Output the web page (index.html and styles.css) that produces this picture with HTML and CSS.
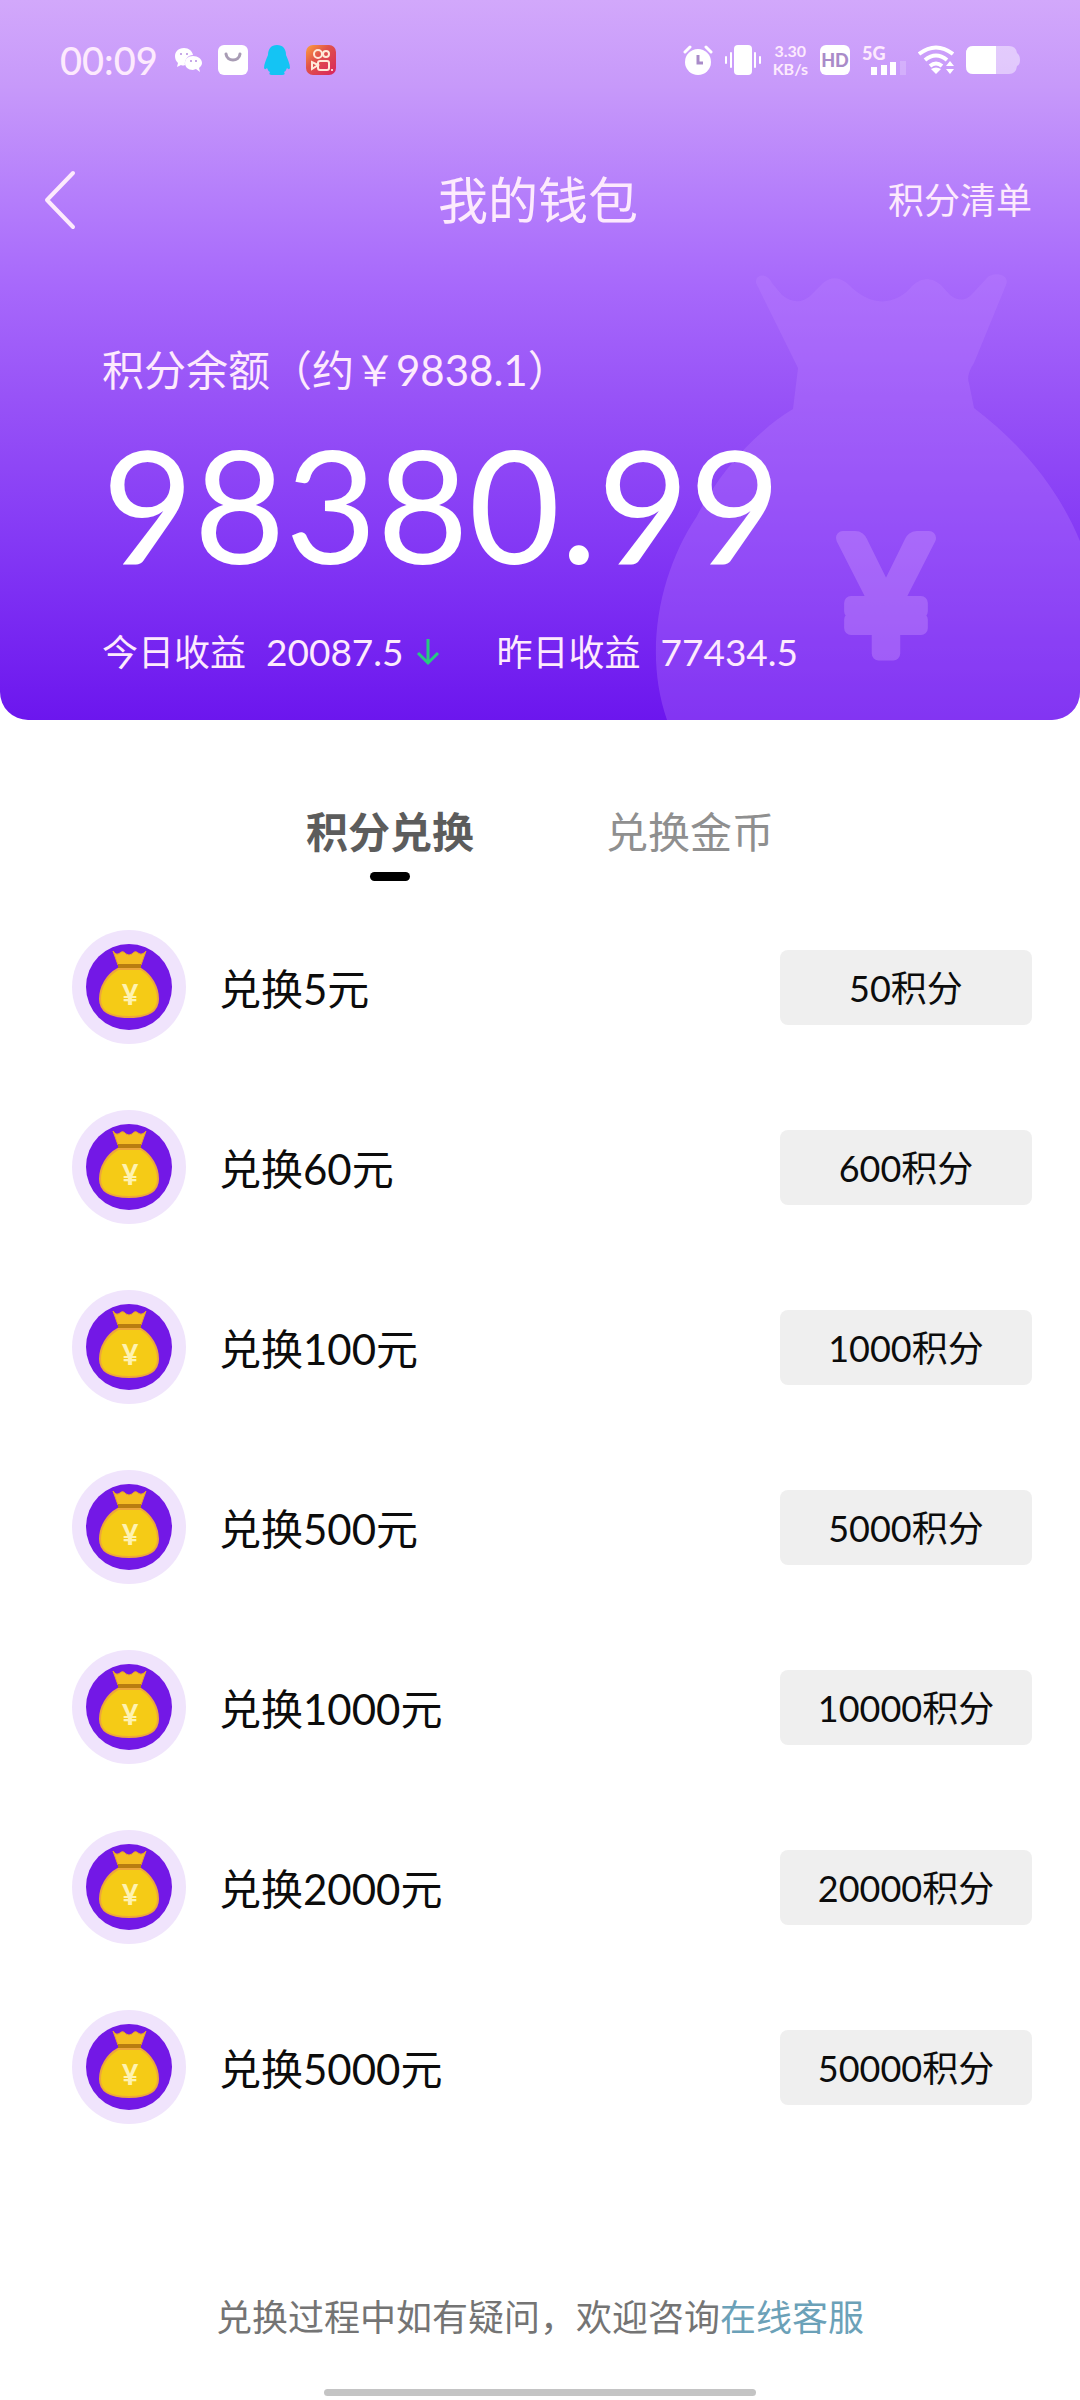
FILE: index.html
```html
<!DOCTYPE html>
<html lang="zh-CN">
<head>
    <meta charset="utf-8">
    <meta name="viewport" content="width=device-width, initial-scale=1">
    <title>我的钱包</title>
    <link rel="stylesheet" href="styles.css">
</head>
<body>
    <!-- shared money bag icon -->
    <svg class="sprite" aria-hidden="true">
        <symbol id="bag" viewBox="0 0 114 114">
            <circle cx="57" cy="57" r="57" fill="#f0e4fc"/>
            <circle cx="57" cy="57" r="43" fill="#7318e6"/>
            <path d="M41 21 Q44 26 48 23 Q51 20 54 24 Q57 26 60 24 Q63 20 66 23 Q70 26 74 21 L69 35 H46 z" fill="#f5bd22" stroke="#e9a02c" stroke-width="1"/>
            <path d="M46 34 h23 v5 h-23 z" fill="#b97d10"/>
            <path d="M46 39 h23 C79 45 86 57 86 69 C86 82 76 87 57 87 C38 87 28 82 28 69 C28 57 35 45 46 39 z" fill="#f5cb16" stroke="#eda63a" stroke-width="2"/>
            <text x="58" y="75" class="bag-yen">¥</text>
        </symbol>
    </svg>

    <header class="header">
        <svg class="watermark" viewBox="0 0 425 449" aria-hidden="true">
            <path class="watermark-bag" d="M101 12 C100 2 113 2 117 12 L127 24 Q142 36 155 25 L168 12 Q180 2 193 13 C215 36 240 36 258 14 Q272 2 286 14 L295 24 Q308 34 318 22 L331 8 C336 0 356 2 351 14 L319 92 Q311 104 314 112 L319 137 C365 172 402 215 425 270 V449 H12 C-12 380 5 300 42 245 C62 205 98 162 138 138 L143 97 z"/>
            <text class="watermark-yen" x="231" y="382">¥</text>
        </svg>

        <div class="status">
            <div class="status-left">
                <time class="clock">00:09</time>
                <svg width="28" height="26" viewBox="0 0 28 26">
                    <path d="M10 1 C4 1 1 5 1 9 C1 12 2 14 4 16 L3 20 L7 18 Q9 19 11 18 C10 13 14 8 19 8 C18 4 15 1 10 1 z" fill="#fff"/>
                    <path d="M19 9 C14 9 11 12 11 16 C11 20 14 23 19 23 L22 22 L26 25 L25 21 C27 19 28 18 28 16 C28 12 24 9 19 9 z" fill="#fff"/>
                    <g fill="#b58de0"><circle cx="7" cy="7" r="1"/><circle cx="13" cy="7" r="1"/><circle cx="17" cy="14" r="1"/><circle cx="22" cy="14" r="1"/></g>
                </svg>
                <svg width="30" height="30" viewBox="0 0 30 30">
                    <rect width="30" height="30" rx="6" fill="#fff"/>
                    <path d="M8 9 C9 17 21 17 22 9" fill="none" stroke="#a89cb4" stroke-width="3" stroke-linecap="round"/>
                </svg>
                <svg width="26" height="30" viewBox="0 0 26 30">
                    <path d="M13 0 C7 0 4 4 4 10 C2 15 0 19 0 23 C1 25 2 24 3 23 Q4 26 6 27 Q4 30 8 30 H18 Q22 30 20 27 Q22 26 23 23 C24 24 25 25 26 23 C26 19 24 15 22 10 C22 4 19 0 13 0 z" fill="#14c4f4"/>
                </svg>
                <svg width="30" height="30" viewBox="0 0 30 30">
                    <defs>
                        <linearGradient id="ks" x1="0" y1="0" x2="1" y2="1">
                            <stop offset="0" stop-color="#ffa23d"/>
                            <stop offset=".4" stop-color="#e0524a"/>
                            <stop offset="1" stop-color="#d8245e"/>
                        </linearGradient>
                    </defs>
                    <rect width="30" height="30" rx="7" fill="url(#ks)"/>
                    <g fill="none" stroke="#ffe9d8" stroke-width="2">
                        <circle cx="12" cy="9" r="4"/><circle cx="20" cy="9" r="3"/>
                        <rect x="12" y="16" width="11" height="9" rx="2"/>
                        <path d="M12 20 L6 17 V24 z"/>
                    </g>
                    <circle cx="26" cy="25" r="1" fill="#fff"/>
                </svg>
            </div>
            <div class="status-right">
                <svg width="30" height="30" viewBox="0 0 30 30">
                    <circle cx="15" cy="17" r="13" fill="#fff"/>
                    <path d="M2 7 L7 2 M28 7 L23 2" stroke="#fff" stroke-width="3" stroke-linecap="round"/>
                    <path d="M15 10 V18 H20" fill="none" stroke="#a98bc9" stroke-width="3"/>
                </svg>
                <svg width="36" height="30" viewBox="0 0 36 30">
                    <rect x="9" y="0" width="18" height="30" rx="4" fill="#fff"/>
                    <path d="M6 8 V22 M30 8 V22 M1 12 V18 M35 12 V18" stroke="#fff" stroke-width="2" stroke-linecap="round"/>
                </svg>
                <div class="speed"><span>3.30</span><span>KB/s</span></div>
                <span class="hd">HD</span>
                <div class="signal">
                    <span>5G</span>
                    <svg width="36" height="14" viewBox="0 0 36 14">
                        <path d="M1 6 h6 v8 h-6 z M11 4 h6 v10 h-6 z M20 1 h6 v13 h-6 z" fill="#fff"/>
                        <path d="M30 0 h6 v14 h-6 z" fill="#fff" opacity=".2"/>
                    </svg>
                </div>
                <svg width="36" height="30" viewBox="0 0 36 30">
                    <g fill="none" stroke="#fff" stroke-width="4">
                        <path d="M1 9 Q18 -4 35 9"/>
                        <path d="M7 15 Q18 6 29 15"/>
                        <path d="M12 21 Q18 16 24 21"/>
                    </g>
                    <path d="M13 24 Q18 21 23 24 L18 29 z" fill="#fff"/>
                    <path d="M32 16 L36 21 H28 z M32 29 L36 24 H28 z" fill="#fff"/>
                </svg>
                <svg width="54" height="28" viewBox="0 0 54 28">
                    <path d="M7 0 H43 Q50 0 51 7 Q54 9 54 14 Q54 19 51 20 Q50 28 43 28 H7 Q0 28 0 20 V8 Q0 0 7 0 z" fill="#fff" opacity=".45"/>
                    <path d="M7 0 H30 V28 H7 Q0 28 0 20 V8 Q0 0 7 0 z" fill="#fff"/>
                </svg>
            </div>
        </div>

        <nav class="navbar">
            <button class="back" type="button" aria-label="返回">
                <svg width="32" height="60" viewBox="0 0 32 60"><path d="M29 3 L3 30 L29 57" fill="none" stroke="currentColor" stroke-width="4" stroke-linecap="round" stroke-linejoin="round"/></svg>
            </button>
            <h1 class="title">我的钱包</h1>
            <a class="bill" href="#">积分清单</a>
        </nav>

        <section class="balance">
            <div class="balance-label">积分余额（约￥9838.1）</div>
            <div class="balance-value">98380.99</div>
            <div class="income">
                <span>今日收益</span>
                <span class="income-num">20087.5</span>
                <svg class="down" width="24" height="28" viewBox="0 0 24 28"><path d="M12 1 V25 M2 15 L12 25 L22 15" fill="none" stroke="#28c981" stroke-width="3"/></svg>
                <span>昨日收益</span>
                <span class="income-num">77434.5</span>
            </div>
        </section>
    </header>

    <main class="main">
        <div class="tabs">
            <button class="tab active" type="button">积分兑换</button>
            <button class="tab" type="button">兑换金币</button>
        </div>

        <ul class="list">
            <li class="item">
                <svg class="icon"><use href="#bag"/></svg>
                <span class="name">兑换5元</span>
                <button class="points" type="button">50积分</button>
            </li>
            <li class="item">
                <svg class="icon"><use href="#bag"/></svg>
                <span class="name">兑换60元</span>
                <button class="points" type="button">600积分</button>
            </li>
            <li class="item">
                <svg class="icon"><use href="#bag"/></svg>
                <span class="name">兑换100元</span>
                <button class="points" type="button">1000积分</button>
            </li>
            <li class="item">
                <svg class="icon"><use href="#bag"/></svg>
                <span class="name">兑换500元</span>
                <button class="points" type="button">5000积分</button>
            </li>
            <li class="item">
                <svg class="icon"><use href="#bag"/></svg>
                <span class="name">兑换1000元</span>
                <button class="points" type="button">10000积分</button>
            </li>
            <li class="item">
                <svg class="icon"><use href="#bag"/></svg>
                <span class="name">兑换2000元</span>
                <button class="points" type="button">20000积分</button>
            </li>
            <li class="item">
                <svg class="icon"><use href="#bag"/></svg>
                <span class="name">兑换5000元</span>
                <button class="points" type="button">50000积分</button>
            </li>
        </ul>
    </main>

    <footer class="footer">
        <p class="help">兑换过程中如有疑问，欢迎咨询<a href="#">在线客服</a></p>
        <div class="home-bar"></div>
    </footer>
</body>
</html>
```

FILE: styles.css
```css
* {
    box-sizing: border-box;
}

body {
    margin: 0;
    min-height: 100vh;
    display: flex;
    flex-direction: column;
    background: #fff;
    color: #0c0c0c;
    font-family: Lato, "Noto Sans CJK SC", sans-serif;
    font-size: 36px;
    line-height: 48px;
}

button {
    border: 0;
    padding: 0;
    background: none;
    color: inherit;
    font: inherit;
    cursor: pointer;
}

a {
    color: inherit;
    text-decoration: none;
}

svg {
    display: block;
    flex: none;
}

.sprite {
    display: none;
}

/* header */
.header {
    position: relative;
    overflow: hidden;
    padding-bottom: 44px;
    border-radius: 0 0 28px 28px;
    background: linear-gradient(#d2a8fb 0%, #c799fa 12%, #b680fb 26%, #a768fb 40%, #9853f7 55%, #8439f5 75%, #6c16ee 100%);
    color: #fdeafd;
}

.watermark {
    position: absolute;
    right: 0;
    bottom: 0;
    width: 425px;
    height: 449px;
}

.watermark-bag {
    fill: #be85ff;
    opacity: .28;
}

.watermark-yen {
    fill: #d8a8ff;
    stroke: #d8a8ff;
    stroke-width: 14px;
    stroke-linecap: round;
    stroke-linejoin: round;
    opacity: .3;
    font-size: 162px;
    text-anchor: middle;
}

/* status bar */
.status {
    position: relative;
    display: flex;
    justify-content: space-between;
    align-items: center;
    height: 120px;
    padding: 0 60px;
}

.status-left,
.status-right {
    display: flex;
    align-items: center;
}

.status-left {
    gap: 16px;
}

.status-right {
    gap: 12px;
}

.clock {
    font-size: 38px;
    font-weight: 500;
}

.speed {
    display: flex;
    flex-direction: column;
    align-items: center;
    font-size: 16px;
    font-weight: 700;
    line-height: 18px;
}

.hd {
    width: 30px;
    height: 30px;
    border-radius: 6px;
    background: #fff;
    color: #a98bc9;
    font-size: 18px;
    font-weight: 900;
    line-height: 30px;
    text-align: center;
}

.signal {
    width: 44px;
    font-size: 18px;
    font-weight: 900;
    line-height: 16px;
}

.signal svg {
    margin-left: 8px;
}

/* nav */
.navbar {
    position: relative;
    display: grid;
    grid-template-columns: 1fr auto 1fr;
    align-items: center;
    height: 160px;
    padding: 0 48px 0 44px;
}

.back {
    justify-self: start;
}

.title {
    margin: 0;
    font-size: 50px;
    font-weight: 400;
}

.bill {
    justify-self: end;
}

/* balance */
.balance {
    position: relative;
    padding: 62px 102px 0;
}

.balance-label {
    font-size: 42px;
    line-height: 56px;
}

.balance-value {
    margin-top: 10px;
    color: #fff;
    font-size: 158px;
    line-height: 190px;
}

.income {
    display: flex;
    align-items: center;
    margin-top: 30px;
}

.income-num {
    margin-left: 20px;
    font-size: 37px;
}

.down {
    margin: 0 57px 0 12px;
}

/* tabs */
.tabs {
    display: flex;
    justify-content: center;
    gap: 132px;
    padding: 80px 0 0;
}

.tab {
    display: flex;
    flex-direction: column;
    align-items: center;
    color: #8f8f8f;
    font-size: 42px;
    line-height: 64px;
}

.tab.active {
    color: #5c5c5c;
    font-weight: 700;
}

.tab.active::after {
    content: "";
    width: 40px;
    height: 9px;
    margin-top: 8px;
    border-radius: 5px;
    background: #000;
}

/* exchange list */
.list {
    margin: 0;
    padding: 16px 48px 0 72px;
    list-style: none;
}

.item {
    display: flex;
    align-items: center;
    height: 180px;
}

.icon {
    width: 114px;
    height: 114px;
}

.bag-yen {
    fill: #fff3b0;
    font-size: 28px;
    font-weight: 900;
    text-anchor: middle;
}

.name {
    flex: 1;
    margin-left: 33px;
    padding-top: 4px;
    font-size: 42px;
}

.points {
    width: 252px;
    height: 75px;
    padding-top: 2px;
    border-radius: 8px;
    background: #efefef;
}

/* footer */
.footer {
    display: flex;
    flex: 1;
    flex-direction: column;
    align-items: center;
    justify-content: space-between;
    padding: 136px 0 4px;
}

.help {
    margin: 0;
    color: #747474;
}

.help a {
    color: #6ba1b8;
}

.home-bar {
    width: 40%;
    height: 7px;
    border-radius: 4px;
    background: #c4c4c4;
}
```
